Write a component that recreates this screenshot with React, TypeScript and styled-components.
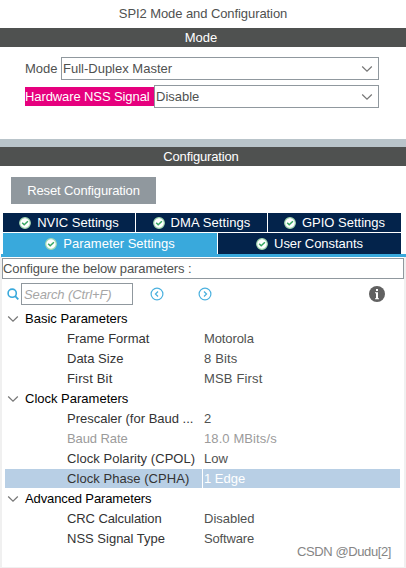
import React from "react";
import styled, { createGlobalStyle } from "styled-components";

const GlobalStyle = createGlobalStyle`
  * { box-sizing: border-box; }
  body {
    margin: 0;
    background: #fff;
    overflow: hidden;
    font: 13px/19px "Liberation Sans", Arial, sans-serif;
    color: #4f5150;
  }
  svg { display: block; flex: none; }
`;

const Window = styled.main`
  position: relative;
  display: flex;
  flex-direction: column;
  width: 406px;
  height: 568px;
  background: #fff;
`;

const Text = styled.span<{ $track?: number }>`
  white-space: pre;
  letter-spacing: ${(p) => p.$track ?? 0}px;
`;

const Title = styled.header`
  height: 28px;
  line-height: 28px;
  text-align: center;
`;

const SectionBar = styled.div`
  height: 19px;
  flex: none;
  text-align: center;
  color: #fff;
  background: #4f5150;
  padding-right: 4px;
`;

const ModePanel = styled.section`
  display: flex;
  flex-direction: column;
  gap: 5px;
  height: 92px;
  padding: 10px 27px 0 25px;
`;

const Field = styled.div`
  display: flex;
  align-items: center;
  height: 23px;
`;

const FieldLabel = styled.label<{ $alert?: boolean }>`
  flex: none;
  width: ${(p) => (p.$alert ? 129 : 36)}px;
  height: 19px;
  white-space: nowrap;
  color: ${(p) => (p.$alert ? "#fff" : "#4f5150")};
  background: ${(p) => (p.$alert ? "#e6007e" : "transparent")};
`;

const Combo = styled.div`
  display: flex;
  flex: 1;
  align-items: center;
  justify-content: space-between;
  height: 23px;
  padding: 0 5px 0 1px;
  border: 1px solid #90989e;
`;

const Splitter = styled.div`
  height: 8px;
  flex: none;
  background: #b9c4ca;
`;

const ResetButton = styled.button`
  width: 145px;
  height: 27px;
  flex: none;
  margin: 11px 0 9px 11px;
  padding: 0;
  border: 0;
  color: #fff;
  background: #90989e;
  font: inherit;
`;

const Tabs = styled.nav`
  display: flex;
  flex-direction: column;
  gap: 1px;
  padding: 0 5px 0 3px;
`;

const TabRow = styled.div<{ $columns: string; $height: number }>`
  display: grid;
  grid-template-columns: ${(p) => p.$columns};
  gap: 1px;
  height: ${(p) => p.$height}px;
`;

const Tab = styled.div<{ $active?: boolean }>`
  display: flex;
  align-items: center;
  justify-content: center;
  gap: 6px;
  color: #fff;
  background: ${(p) => (p.$active ? "#39a9dc" : "#03234b")};
`;

const TabRule = styled.div`
  height: 3px;
  flex: none;
  margin-left: 1px;
  background: #39a9dc;
`;

const Panel = styled.section`
  flex: 1;
  border: solid #f0f0f0;
  border-width: 0 2px 1px;
  padding-top: 1px;
`;

const Hint = styled.div`
  height: 21px;
  line-height: 19px;
  border: 1px solid #90989e;
`;

const Toolbar = styled.div`
  display: flex;
  align-items: center;
  height: 22px;
  margin: 4px 0 4px;
  padding: 0 19px 0 5px;
`;

const SearchBox = styled.div`
  width: 112px;
  height: 22px;
  margin: 0 17px 0 2px;
  padding-left: 2px;
  border: 1px solid #90989e;
  line-height: 21px;
  font-style: italic;
  color: #a6a6a6;
`;

const StepIcons = styled.div`
  display: flex;
  flex: 1;
  gap: 34px;
`;

const Group = styled.div`
  display: flex;
  align-items: center;
  gap: 6px;
  height: 20px;
  padding: 0 0 1px 5px;
  color: #000;
`;

const Row = styled.div<{ $selected?: boolean; $muted?: boolean }>`
  display: grid;
  grid-template-columns: 197px 197px;
  gap: 1px;
  height: 20px;
  padding: 0 0 1px 3px;
  color: ${(p) => (p.$muted ? "#9b9b9b" : "#333")};
  > * { background: ${(p) => (p.$selected ? "#b8cfe5" : "transparent")}; }
  > :first-child { padding-left: 62px; }
  > :last-child {
    padding-left: 1px;
    color: ${(p) => (p.$selected ? "#fff" : p.$muted ? "#9b9b9b" : "#4f5150")};
  }
`;

const Watermark = styled.div`
  position: absolute;
  left: 297px;
  top: 542px;
  color: #858585;
`;

const Chevron = ({ color = "#777" }: { color?: string }) => (
  <svg width="12" height="8" viewBox="0 0 12 8" fill="none" stroke={color} strokeWidth="1.2">
    <path d="M1.2 1.5 6 6.2 10.8 1.5" />
  </svg>
);

const Check = () => (
  <svg width="12" height="12" viewBox="0 0 12 12">
    <circle cx="6" cy="6" r="5.3" fill="#fff" stroke="#a5d9b2" strokeWidth="1.2" />
    <path d="M3.2 5.7 5.2 7.8 8.9 4.2" fill="none" stroke="#35a660" strokeWidth="1.5" />
  </svg>
);

const Magnifier = () => (
  <svg width="12" height="12" viewBox="0 0 12 12" fill="none" stroke="#39a9dc">
    <circle cx="5.2" cy="5.2" r="4.1" strokeWidth="1.6" />
    <path d="M8.2 8.2 11.3 11.4" strokeWidth="1.8" />
  </svg>
);

const Step = ({ next }: { next?: boolean }) => (
  <svg width="14" height="14" viewBox="0 0 14 14" fill="none" stroke="#4bb1df">
    <circle cx="7" cy="7" r="5.9" strokeWidth="1.2" />
    <path d={next ? "M6 4.5 8.5 7 6 9.5" : "M8 4.5 5.5 7 8 9.5"} strokeWidth="1.3" />
  </svg>
);

const Info = () => (
  <svg width="16" height="16" viewBox="0 0 16 16">
    <circle cx="8" cy="8" r="8" fill="#616161" />
    <path d="M7 3h2v2H7zM6 6.2h3v6h1v1H6v-1h1v-5H6z" fill="#fff" />
  </svg>
);

type Param = { name: string; value: string; nt?: number; vt?: number; selected?: boolean; muted?: boolean };

const groups: { title: string; track?: number; params: Param[] }[] = [
  {
    title: "Basic Parameters",
    params: [
      { name: "Frame Format", value: "Motorola", vt: -0.1 },
      { name: "Data Size", value: "8 Bits", vt: 0.15 },
      { name: "First Bit", value: "MSB First", nt: 0.15, vt: 0.15 },
    ],
  },
  {
    title: "Clock Parameters",
    params: [
      { name: "Prescaler (for Baud ...", value: "2" },
      { name: "Baud Rate", value: "18.0 MBits/s", muted: true, nt: -0.1, vt: 0.1 },
      { name: "Clock Polarity (CPOL)", value: "Low", nt: 0.05 },
      { name: "Clock Phase (CPHA)", value: "1 Edge", selected: true, nt: 0.05 },
    ],
  },
  {
    title: "Advanced Parameters",
    track: -0.12,
    params: [
      { name: "CRC Calculation", value: "Disabled", nt: -0.1 },
      { name: "NSS Signal Type", value: "Software", vt: -0.15 },
    ],
  },
];

export default function App() {
  return (
    <>
      <GlobalStyle />
      <Window>
        <Title><Text $track={-0.08}>SPI2 Mode and Configuration</Text></Title>
        <SectionBar><Text>Mode</Text></SectionBar>
        <ModePanel>
          <Field>
            <FieldLabel><Text>Mode</Text></FieldLabel>
            <Combo><Text>Full-Duplex Master</Text><Chevron /></Combo>
          </Field>
          <Field>
            <FieldLabel $alert><Text $track={-0.1}>Hardware NSS Signal</Text></FieldLabel>
            <Combo><Text>Disable</Text><Chevron /></Combo>
          </Field>
        </ModePanel>
        <Splitter />
        <SectionBar><Text $track={-0.15}>Configuration</Text></SectionBar>
        <ResetButton><Text $track={-0.12}>Reset Configuration</Text></ResetButton>
        <Tabs>
          <TabRow $columns="132px 131px 1fr" $height={19}>
            <Tab><Check /><Text>NVIC Settings</Text></Tab>
            <Tab><Check /><Text $track={0.1}>DMA Settings</Text></Tab>
            <Tab><Check /><Text>GPIO Settings</Text></Tab>
          </TabRow>
          <TabRow $columns="214px 1fr" $height={21}>
            <Tab $active><Check /><Text>Parameter Settings</Text></Tab>
            <Tab><Check /><Text $track={-0.05}>User Constants</Text></Tab>
          </TabRow>
        </Tabs>
        <TabRule />
        <Panel>
          <Hint><Text $track={-0.12}>Configure the below parameters :</Text></Hint>
          <Toolbar>
            <Magnifier />
            <SearchBox><Text $track={-0.12}>Search (Ctrl+F)</Text></SearchBox>
            <StepIcons><Step /><Step next /></StepIcons>
            <Info />
          </Toolbar>
          {groups.map((g) => (
            <React.Fragment key={g.title}>
              <Group><Chevron /><Text $track={g.track}>{g.title}</Text></Group>
              {g.params.map((p) => (
                <Row key={p.name} $selected={p.selected} $muted={p.muted}>
                  <Text $track={p.nt}>{p.name}</Text>
                  <Text $track={p.vt}>{p.value}</Text>
                </Row>
              ))}
            </React.Fragment>
          ))}
        </Panel>
        <Watermark><Text $track={-0.4}>CSDN @Dudu[2]</Text></Watermark>
      </Window>
    </>
  );
}
